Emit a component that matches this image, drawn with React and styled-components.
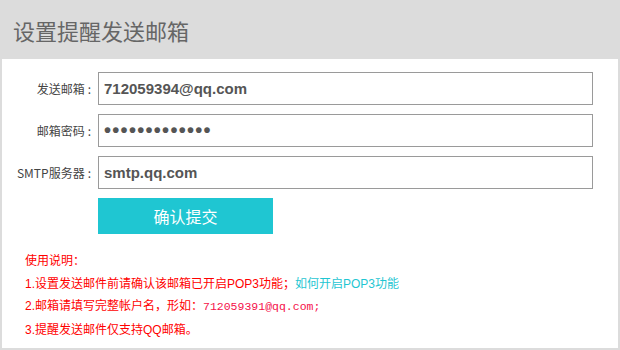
import React from "react";
import styled, { createGlobalStyle } from "styled-components";

const Global = createGlobalStyle`
  html, body { margin: 0; padding: 0; background: #fff; }
  body { font-family: "Liberation Sans", "Noto Sans CJK SC", sans-serif; }
`;

const Panel = styled.div`
  width: 620px;
  height: 350px;
  box-sizing: border-box;
  border: 2px solid #dcdcdc;
  border-top: 0;
  background: #fff;
  display: flex;
  flex-direction: column;
`;

const Header = styled.div`
  height: 59px;
  background: #dcdcdc;
  display: flex;
  align-items: center;
  margin: 0 -2px;
  padding-left: 13px;
`;

const Title = styled.h1`
  margin: 0;
  font-size: 22px;
  font-weight: normal;
  color: #666;
`;

const Form = styled.div`
  display: grid;
  grid-template-columns: 90px 495px;
  column-gap: 6px;
  row-gap: 9px;
  padding-top: 13px;
  align-items: center;
`;

const Label = styled.label`
  font-family: "Noto Sans CJK SC", sans-serif;
  font-size: 12px;
  color: #444;
  text-align: right;
  white-space: nowrap;
`;

const Colon = styled.span`
  margin-left: 3px;
  margin-right: 1px;
`;

const Field = styled.input`
  box-sizing: border-box;
  width: 495px;
  height: 33px;
  border: 1px solid #9a9a9a;
  padding: 0 5px;
  margin: 0;
  font-family: "Liberation Sans", "Noto Sans CJK SC", sans-serif;
  font-size: ${(p) => (p.type === "password" ? "20px" : "15px")};
  font-weight: bold;
  color: #555;
  outline: none;
  letter-spacing: ${(p) => (p.type === "password" ? "1.3px" : "0")};
`;

const Submit = styled.button`
  grid-column: 2;
  width: 175px;
  height: 36px;
  border: 0;
  background: #1fc6d2;
  color: #fff;
  font-family: "Liberation Sans", "Noto Sans CJK SC", sans-serif;
  font-size: 16px;
  padding: 0;
  cursor: pointer;
`;

const Notes = styled.div`
  margin-top: 16px;
  padding-left: 23px;
  font-size: 12px;
  line-height: 22.5px;
  color: #f00;
`;

const Line = styled.div`
  white-space: nowrap;
`;

const Link = styled.a`
  color: #1fc6d2;
  text-decoration: none;
`;

const Mono = styled.span`
  font-family: "Liberation Mono", monospace;
  font-size: 11.5px;
  color: #f5104a;
`;

export default function App() {
  return (
    <>
      <Global />
      <Panel>
        <Header>
          <Title>设置提醒发送邮箱</Title>
        </Header>
        <Form>
          <Label>发送邮箱<Colon>:</Colon></Label>
          <Field type="text" readOnly defaultValue="712059394@qq.com" />
          <Label>邮箱密码<Colon>:</Colon></Label>
          <Field type="password" readOnly defaultValue="1234567890123" />
          <Label>SMTP服务器<Colon>:</Colon></Label>
          <Field type="text" readOnly defaultValue="smtp.qq.com" />
          <Submit>确认提交</Submit>
        </Form>
        <Notes>
          <Line>使用说明：</Line>
          <Line>
            1.设置发送邮件前请确认该邮箱已开启POP3功能；<Link href="#">如何开启POP3功能</Link>
          </Line>
          <Line>
            2.邮箱请填写完整帐户名，形如：<Mono>712059391@qq.com;</Mono>
          </Line>
          <Line>3.提醒发送邮件仅支持QQ邮箱。</Line>
        </Notes>
      </Panel>
    </>
  );
}
